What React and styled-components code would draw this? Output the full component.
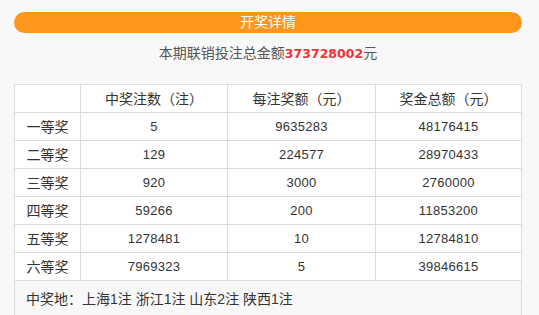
import React from 'react';
import styled, { createGlobalStyle } from 'styled-components';

const GlobalStyle = createGlobalStyle`
  html, body {
    margin: 0;
    padding: 0;
    background: #f8f8f8;
  }

  body {
    font-family: 'Liberation Sans', 'Noto Sans CJK SC', sans-serif;
    color: #333;
  }
`;

const Page = styled.div`
  width: 508px;
  padding: 12px 17px 0 14px;
`;

const TitleBar = styled.div`
  height: 21px;
  border-radius: 11px;
  background: #ff961c;
  color: #fff;
  font-size: 14px;
  line-height: 21px;
  text-align: center;
`;

const Summary = styled.p`
  margin: 10px 0 21px;
  height: 20px;
  line-height: 20px;
  font-size: 14px;
  color: #555;
  text-align: center;
`;

const Amount = styled.span`
  font-family: 'DejaVu Sans', sans-serif;
  font-weight: bold;
  font-size: 12.5px;
  color: #ef3239;
`;

const Table = styled.table`
  width: 508px;
  border-collapse: collapse;
  background: #fff;
  table-layout: fixed;
`;

const Row = styled.tr`
  height: 28px;
`;

const Cell = styled.td`
  border: 1px solid #dfdcd7;
  padding: 0;
  line-height: 16px;
  text-align: center;
  font-size: ${({ $num }) => ($num ? '13px' : '14px')};
  letter-spacing: ${({ $num }) => ($num ? '0.3px' : '0')};
  width: ${({ $w }) => $w || 'auto'};
`;

const FootCell = styled.td`
  border: 1px solid #dfdcd7;
  height: 36px;
  padding: 0 0 0 11px;
  line-height: 16px;
  background: #f8f8f8;
  font-size: 14px;
  text-align: left;
`;

const rows = [
  ['一等奖', '5', '9635283', '48176415'],
  ['二等奖', '129', '224577', '28970433'],
  ['三等奖', '920', '3000', '2760000'],
  ['四等奖', '59266', '200', '11853200'],
  ['五等奖', '1278481', '10', '12784810'],
  ['六等奖', '7969323', '5', '39846615'],
];

const App = () => (
  <>
    <GlobalStyle />
    <Page>
      <TitleBar>开奖详情</TitleBar>
      <Summary>
        本期联销投注总金额<Amount>373728002</Amount>元
      </Summary>
      <Table>
        <tbody>
          <Row>
            <Cell $w="65px"></Cell>
            <Cell $w="146px">中奖注数（注）</Cell>
            <Cell $w="147px">每注奖额（元）</Cell>
            <Cell>奖金总额（元）</Cell>
          </Row>
          {rows.map((row) => (
            <Row key={row[0]}>
              <Cell>{row[0]}</Cell>
              <Cell $num>{row[1]}</Cell>
              <Cell $num>{row[2]}</Cell>
              <Cell $num>{row[3]}</Cell>
            </Row>
          ))}
          <tr>
            <FootCell colSpan={4}>中奖地：上海1注 浙江1注 山东2注 陕西1注</FootCell>
          </tr>
        </tbody>
      </Table>
    </Page>
  </>
);

export default App;
